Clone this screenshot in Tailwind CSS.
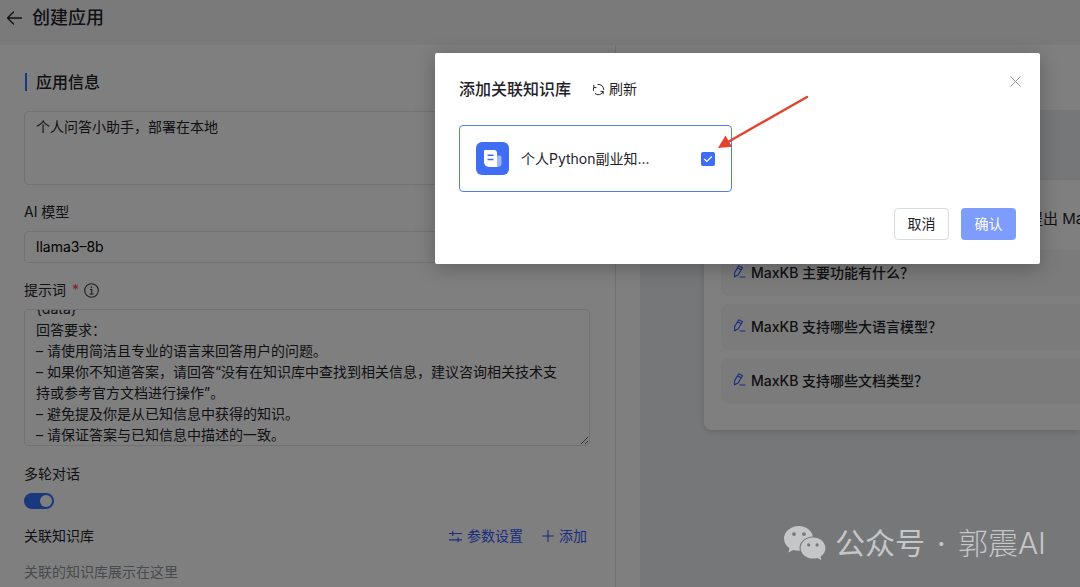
<!DOCTYPE html>
<html lang="zh-CN">
<head>
<meta charset="utf-8">
<title>创建应用</title>
<script src="https://cdn.jsdelivr.net/npm/@tailwindcss/browser@4"></script>
</head>
<body class="relative flex h-screen flex-col overflow-hidden bg-white font-['Inter','Noto_Sans_CJK_SC',sans-serif] text-sm text-[#1f2329]">
  <header class="flex h-[45px] shrink-0 items-center gap-[9px] bg-[#f4f5f5] pb-[10px] pl-[6px]">
    <button type="button" aria-label="返回">
      <svg class="h-4 w-[17px]" viewBox="0 0 17 16" fill="none" stroke="currentColor" stroke-width="1.3" stroke-linecap="round" stroke-linejoin="round"><path d="M15.5 8H1.5M7.5 2 1.5 8l6 6"/></svg>
    </button>
    <h1 class="text-lg font-medium">创建应用</h1>
  </header>

  <main class="flex min-h-0 flex-1">
    <form class="flex w-[616px] shrink-0 flex-col border-r border-[#e3e4e6] pl-6 pr-[25px]">
      <h2 class="mt-[25px] flex h-6 items-center gap-[9px] text-base font-medium"><span class="ml-px h-[18px] w-[2px] bg-[#3370ff]"></span>应用信息</h2>
      <textarea aria-label="应用描述" class="mt-[17px] h-[74px] shrink-0 resize-none rounded border border-[#e3e5e7] px-[11px] py-1 leading-[21px]">个人问答小助手，部署在本地</textarea>

      <label for="model" class="mt-4 h-[22px] leading-[22px]">AI 模型</label>
      <select id="model" class="mt-2 h-8 shrink-0 appearance-none rounded border border-[#e3e5e7] px-[11px] text-black"><option>llama3–8b</option></select>

      <label for="prompt" class="mt-4 flex h-[22px] items-center leading-[22px]">提示词<span class="ml-[6px] text-[#f54a45]">*</span>
        <svg class="ml-[5px] size-[15px]" viewBox="0 0 15 15" fill="none" stroke="#3a3f45" stroke-width="1.1"><circle cx="7.500" cy="7.500" r="6.800"/><path d="M6 6.500h1.700v4.500M5.700 11h4"/><circle cx="7.400" cy="4.200" r=".5" fill="#3a3f45" stroke-width=".7"/></svg>
      </label>
      <textarea id="prompt" class="mt-2 h-[137px] shrink-0 resize-y rounded border border-[#e3e5e7] pl-[11px] pr-5 leading-[21px] [scrollbar-width:none]">{data}
回答要求：
– 请使用简洁且专业的语言来回答用户的问题。
– 如果你不知道答案，请回答“没有在知识库中查找到相关信息，建议咨询相关技术支持或参考官方文档进行操作”。
– 避免提及你是从已知信息中获得的知识。
– 请保证答案与已知信息中描述的一致。</textarea>

      <label for="multi" class="mt-[17px] h-[22px] leading-[22px]">多轮对话</label>
      <input id="multi" type="checkbox" role="switch" checked class="mt-2 h-4 w-[30px] shrink-0 appearance-none rounded-full bg-[#3370ff] p-[2px] before:block before:size-3 before:rounded-full before:bg-white checked:before:ml-auto">

      <div class="mt-4 flex h-[22px] items-center">
        <span>关联知识库</span>
        <button type="button" class="ml-auto flex items-center gap-[5px] text-[#3359ff]">
          <svg class="size-[13px]" viewBox="0 0 13 13" fill="none" stroke="currentColor" stroke-width="1.2"><path d="M0 3.500h13M3.800 1v5M0 9.800h13M9 7.300v5"/></svg>参数设置
        </button>
        <button type="button" class="ml-[19px] mr-[3px] flex items-center gap-[5px] text-[#3359ff]">
          <svg class="size-3" viewBox="0 0 12 12" fill="none" stroke="currentColor" stroke-width="1.1"><path d="M0 6h12M6 0v12"/></svg>添加
        </button>
      </div>
      <p class="mt-[14px] h-[22px] leading-[22px] text-[#8f959e]">关联的知识库展示在这里</p>
    </form>

    <section class="ml-6 mt-[65px] min-w-0 flex-1 overflow-hidden bg-[#ebeef2] pl-16 pt-[70px]">
      <div class="h-[250px] rounded-l-lg bg-white pl-[17px] pt-7 shadow-[0_2px_5px_rgba(31,35,41,0.15)]">
        <p class="whitespace-nowrap pl-[307px] text-[15px] leading-[22px]">提出 Ma</p>
        <div class="mt-5 flex flex-col gap-2">
          <button type="button" class="flex h-[46px] items-center gap-[5px] rounded-l-lg bg-[#f7f7f7] pl-3 font-medium">
            <svg class="mb-1 size-[13px]" viewBox="0 0 13 13" fill="none" stroke="#3359ff" stroke-width="1.1" stroke-linejoin="round"><path d="M5.800.8 9.500 2.800 5 10 1.500 11.800 1.600 7.600ZM4.600 2.800 8.200 5M6.500 12H12.500"/></svg>MaxKB 主要功能有什么？
          </button>
          <button type="button" class="flex h-[46px] items-center gap-[5px] rounded-l-lg bg-[#f7f7f7] pl-3 font-medium">
            <svg class="mb-1 size-[13px]" viewBox="0 0 13 13" fill="none" stroke="#3359ff" stroke-width="1.1" stroke-linejoin="round"><path d="M5.800.8 9.500 2.800 5 10 1.500 11.800 1.600 7.600ZM4.600 2.800 8.200 5M6.500 12H12.500"/></svg>MaxKB 支持哪些大语言模型？
          </button>
          <button type="button" class="flex h-[46px] items-center gap-[5px] rounded-l-lg bg-[#f7f7f7] pl-3 font-medium">
            <svg class="mb-1 size-[13px]" viewBox="0 0 13 13" fill="none" stroke="#3359ff" stroke-width="1.1" stroke-linejoin="round"><path d="M5.800.8 9.500 2.800 5 10 1.500 11.800 1.600 7.600ZM4.600 2.800 8.200 5M6.500 12H12.500"/></svg>MaxKB 支持哪些文档类型？
          </button>
        </div>
      </div>
    </section>
  </main>

  <div class="absolute inset-0 bg-black/50"></div>

  <div role="dialog" aria-labelledby="dialog-title" class="absolute right-10 top-[53px] w-[605px] rounded-[2px] bg-white px-6 pb-6 pt-6 shadow-[0_4px_20px_rgba(0,0,0,0.25)]">
    <div class="flex h-6 items-center">
      <h2 id="dialog-title" class="text-base font-medium">添加关联知识库</h2>
      <button type="button" class="ml-[21px] flex items-center gap-1">
        <svg class="size-[13px]" viewBox="0 0 13 13" fill="none" stroke="currentColor" stroke-width="1"><path d="M1.500 7.800A5.200 5.200 0 0 1 1.800 4.600V1.800M1.800 4.600H4.500M5.600 1.500A5.200 5.200 0 0 1 11.700 6.800M11.200 11.200V8.400H8.500M11.200 8.400A5.200 5.200 0 0 1 3 10.500"/></svg>刷新
      </button>
      <button type="button" aria-label="关闭" class="mb-4 ml-auto mr-[-5px]">
        <svg class="size-[11px]" viewBox="0 0 11 11" fill="none" stroke="#8f959e" stroke-width="1"><path d="m.5.5 10 10m0-10-10 10"/></svg>
      </button>
    </div>
    <label class="mt-6 flex h-[67px] w-[273px] items-center rounded border border-[#527df5] px-4">
      <svg class="size-[33px]" viewBox="0 0 33 33"><rect width="33" height="33" rx="6" fill="#3f6ef5"/><path d="M20 13.500h3.500a2 2 0 0 1 2 2v5.500a4 4 0 0 1-4 4h-3Z" fill="#9db5fa"/><path d="M9 8h9a3 3 0 0 1 3 3v14h-8a5 5 0 0 1-5-5V9a1 1 0 0 1 1-1Z" fill="#fff"/><path d="M11.500 13.200h6M11.500 17.500h6" stroke="#3f6ef5" stroke-width="1.500"/></svg>
      <span class="ml-3">个人Python副业知...</span>
      <span class="relative ml-auto flex">
        <input type="checkbox" checked class="size-[14px] appearance-none rounded-[2px] bg-[#3f6ef5]">
        <svg class="pointer-events-none absolute inset-0 size-[14px]" viewBox="0 0 14 14" fill="none" stroke="#fff" stroke-width="1.200"><path d="m3.300 7 2.500 2.500 5-5"/></svg>
      </span>
    </label>
    <div class="mt-4 flex justify-end gap-3">
      <button type="button" class="h-8 w-[55px] rounded border border-[#d9dcdf]">取消</button>
      <button type="button" class="h-8 w-[55px] rounded bg-[#7d9cfb] text-white">确认</button>
    </div>
    <svg class="pointer-events-none absolute left-[283px] top-[41px] h-[56px] w-[92px]" viewBox="0 0 92 56"><path d="M89 3 10 48" stroke="#e2432c" stroke-width="2.400" stroke-linecap="round"/><path d="M0 54 7.500 41.500 14 52.800Z" fill="#e2432c"/></svg>
  </div>

  <div class="absolute bottom-[24px] right-[34px] flex items-center text-[30px] leading-10 text-[#c5c6c7]">
    <svg class="mr-[9px] h-[34px] w-[42px]" viewBox="0 0 42 34"><path fill="#c5c6c7" fill-rule="evenodd" d="M15 0C6.700 0 0 5.600 0 12.600c0 3.900 2.100 7.400 5.500 9.700L4.300 26.500l5-2.600c2 .6 4.400.9 6.600.8A11 11 0 0 1 15.500 22c0-6.400 6-11.400 13.500-11.600C27.600 4.400 21.900 0 15 0ZM10 6.200a1.900 1.900 0 1 1 0 3.800 1.900 1.900 0 0 1 0-3.800Zm10 0a1.900 1.900 0 1 1 0 3.800 1.900 1.900 0 0 1 0-3.800Z"/><path fill="#c5c6c7" fill-rule="evenodd" d="M29 11.500c-6.900 0-12.400 4.700-12.400 10.500S22.100 32.600 29 32.600c1.500 0 3-.2 4.300-.6l4.200 2.200-1.100-3.500c3-1.900 5-5 5-8.500 0-6-5.500-10.700-12.400-10.700Zm-4.300 5.800a1.600 1.600 0 1 1 0 3.200 1.600 1.600 0 0 1 0-3.200Zm8.400 0a1.600 1.600 0 1 1 0 3.200 1.600 1.600 0 0 1 0-3.200Z"/></svg>
    <span>公众号</span><span class="w-[33px] text-center">·</span><span class="font-light">郭震AI</span>
  </div>
  <script>
    // Keep the end of the prompt in view
    const prompt = document.getElementById('prompt');
    prompt.scrollTop = prompt.scrollHeight;
    document.fonts.ready.then(() => { prompt.scrollTop = prompt.scrollHeight; });
  </script>
</body>
</html>
